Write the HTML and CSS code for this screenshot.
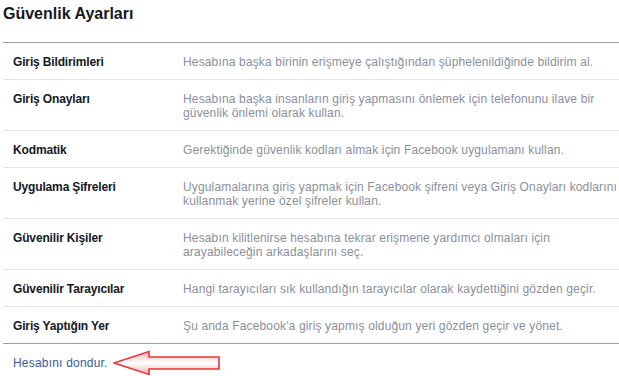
FILE: index.html
```html
<!DOCTYPE html>
<html lang="tr">
<head>
  <meta charset="UTF-8">
  <title>Güvenlik Ayarları</title>
  <link rel="stylesheet" href="styles.css">
</head>
<body>
  <div class="settings">
    <h2 class="settings-title">Güvenlik Ayarları</h2>
    <ul class="setting-list">
      <li class="setting-row">
        <div class="setting-name">Giriş Bildirimleri</div>
        <div class="setting-desc">Hesabına başka birinin erişmeye çalıştığından şüphelenildiğinde bildirim al.</div>
      </li>
      <li class="setting-row">
        <div class="setting-name">Giriş Onayları</div>
        <div class="setting-desc">Hesabına başka insanların giriş yapmasını önlemek için telefonunu ilave bir<br>güvenlik önlemi olarak kullan.</div>
      </li>
      <li class="setting-row">
        <div class="setting-name">Kodmatik</div>
        <div class="setting-desc">Gerektiğinde güvenlik kodları almak için Facebook uygulamanı kullan.</div>
      </li>
      <li class="setting-row">
        <div class="setting-name">Uygulama Şifreleri</div>
        <div class="setting-desc">Uygulamalarına giriş yapmak için Facebook şifreni veya Giriş Onayları kodlarını<br>kullanmak yerine özel şifreler kullan.</div>
      </li>
      <li class="setting-row">
        <div class="setting-name">Güvenilir Kişiler</div>
        <div class="setting-desc">Hesabın kilitlenirse hesabına tekrar erişmene yardımcı olmaları için<br>arayabileceğin arkadaşlarını seç.</div>
      </li>
      <li class="setting-row">
        <div class="setting-name">Güvenilir Tarayıcılar</div>
        <div class="setting-desc">Hangi tarayıcıları sık kullandığın tarayıcılar olarak kaydettiğini gözden geçir.</div>
      </li>
      <li class="setting-row">
        <div class="setting-name">Giriş Yaptığın Yer</div>
        <div class="setting-desc">Şu anda Facebook'a giriş yapmış olduğun yeri gözden geçir ve yönet.</div>
      </li>
    </ul>
    <div class="settings-footer">
      <a href="#" class="deactivate-link">Hesabını dondur.</a>
      <svg class="hint-arrow" width="110" height="26" viewBox="0 0 110 26">
        <defs>
          <linearGradient id="arrowFill" x1="0" y1="0" x2="0" y2="1">
            <stop offset="0" stop-color="#f7b3b5"/>
            <stop offset="0.5" stop-color="#ffffff"/>
            <stop offset="1" stop-color="#f7b3b5"/>
          </linearGradient>
        </defs>
        <path d="M1 13 L36 1.5 L36 7 L106 7 L106 19 L36 19 L36 24.5 Z" fill="url(#arrowFill)" stroke="#e8343c" stroke-width="1.6" stroke-linejoin="miter"/>
      </svg>
    </div>
  </div>
</body>
</html>
```

FILE: styles.css
```css
body {
  margin: 0;
  background-color: #fff;
  font-family: "Liberation Sans", Arial, sans-serif;
  font-size: 12px;
  color: #141823;
}
.settings {
  padding: 0 0 0 3px;
}
.settings-title {
  margin: 4px 0 18px 0;
  font-size: 16px;
  line-height: 20px;
  font-weight: bold;
  color: #141823;
}
.setting-list {
  list-style: none;
  margin: 0;
  padding: 0;
  border-top: 1px solid #a0a0a0;
  border-bottom: 1px solid #a0a0a0;
}
.setting-row {
  display: flex;
  padding: 12px 0 10px 10px;
  line-height: 14px;
  border-top: 1px solid #e5e5e5;
}
.setting-row:first-child {
  border-top: none;
}
.setting-name {
  width: 170px;
  flex-shrink: 0;
  font-weight: bold;
  letter-spacing: -0.15px;
  color: #141823;
}
.setting-desc {
  white-space: nowrap;
  letter-spacing: 0.15px;
  color: #8a8f99;
}
.settings-footer {
  display: flex;
  align-items: center;
  padding: 6px 0 0 10px;
}
.deactivate-link {
  color: #3b5998;
  text-decoration: none;
  line-height: 14px;
  letter-spacing: 0.2px;
}
.hint-arrow {
  margin-left: 5px;
}
```
